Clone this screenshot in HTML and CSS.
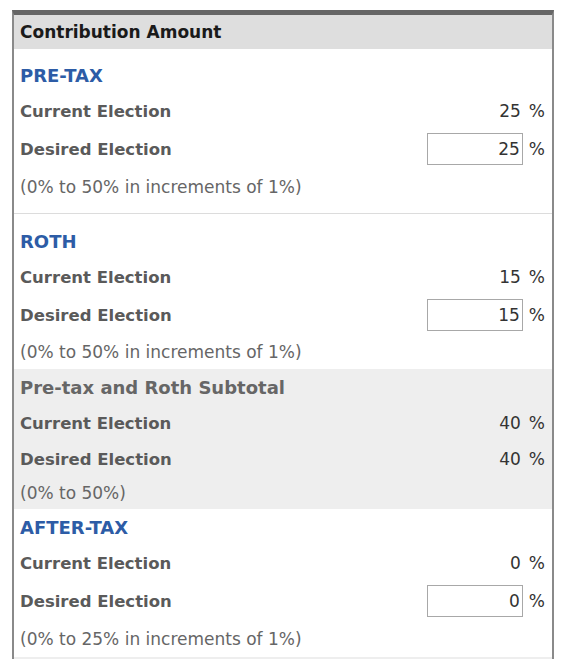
FILE: index.html
```html
<!DOCTYPE html>
<html>
<head>
<meta charset="utf-8">
<link rel="stylesheet" href="styles.css">
</head>
<body>
<div class="panel">
  <div class="panel-head">Contribution Amount</div>

  <div class="section first">
    <div class="row title">PRE-TAX</div>
    <div class="row"><span class="label">Current Election</span><span class="value">25<span class="pct">%</span></span></div>
    <div class="row desired"><span class="label">Desired Election</span><span class="value"><span class="input">25</span><span class="pct">%</span></span></div>
    <div class="row note">(0% to 50% in increments of 1%)</div>
  </div>

  <div class="section roth">
    <div class="row title">ROTH</div>
    <div class="row"><span class="label">Current Election</span><span class="value">15<span class="pct">%</span></span></div>
    <div class="row desired"><span class="label">Desired Election</span><span class="value"><span class="input">15</span><span class="pct">%</span></span></div>
    <div class="row note">(0% to 50% in increments of 1%)</div>
  </div>

  <div class="section subtotal">
    <div class="row title gray">Pre-tax and Roth Subtotal</div>
    <div class="row"><span class="label">Current Election</span><span class="value">40<span class="pct">%</span></span></div>
    <div class="row"><span class="label">Desired Election</span><span class="value">40<span class="pct">%</span></span></div>
    <div class="row note short">(0% to 50%)</div>
  </div>

  <div class="section after">
    <div class="row title">AFTER-TAX</div>
    <div class="row"><span class="label">Current Election</span><span class="value">0<span class="pct">%</span></span></div>
    <div class="row desired"><span class="label">Desired Election</span><span class="value"><span class="input">0</span><span class="pct">%</span></span></div>
    <div class="row note">(0% to 25% in increments of 1%)</div>
  </div>
  <div class="next"></div>
</div>
</body>
</html>
```
FILE: styles.css
```css
html, body {
  margin: 0;
  padding: 0;
  background: #fff;
}
body {
  font-family: "DejaVu Sans", Verdana, sans-serif;
  color: #333;
}
.panel {
  margin: 10px 0 0 12px;
  width: 538px;
  border-top: 5px solid #666;
  border-left: 2px solid #8a8a8a;
  border-right: 2px solid #8a8a8a;
}
.panel-head {
  height: 34px;
  background: #dedede;
  color: #1a1a1a;
  font-weight: bold;
  font-size: 17px;
  display: flex;
  align-items: center;
  padding-left: 6px;
}
.section {
  padding: 0 7px 0 6px;
}
.section.first {
  padding-top: 8px;
  padding-bottom: 8px;
  border-bottom: 1px solid #dcdcdc;
}
.section.roth {
  padding-top: 9px;
}
.section.roth .note {
  height: 34px;
}
.section.subtotal {
  background: #eeeeee;
}
.row {
  height: 36px;
  display: flex;
  align-items: center;
  justify-content: space-between;
  font-size: 17px;
}
.row.desired {
  height: 40px;
}
.title {
  font-size: 18px;
  font-weight: bold;
  color: #2d5ca6;
}
.title.gray {
  color: #666;
}
.label {
  font-size: 16.5px;
  font-weight: bold;
  color: #5a5a5a;
}
.value {
  display: flex;
  align-items: center;
  color: #333;
}
.pct {
  margin-left: 8px;
}
.input {
  width: 96px;
  height: 32px;
  box-sizing: border-box;
  border: 1px solid #a8a8a8;
  display: flex;
  align-items: center;
  justify-content: flex-end;
  padding-right: 2px;
  background: #fff;
}
.input + .pct {
  margin-left: 6px;
}
.note {
  font-size: 17px;
  color: #666;
}
.note.short {
  height: 32px;
}
.next {
  height: 6px;
  background: #eeeeee;
}
```
